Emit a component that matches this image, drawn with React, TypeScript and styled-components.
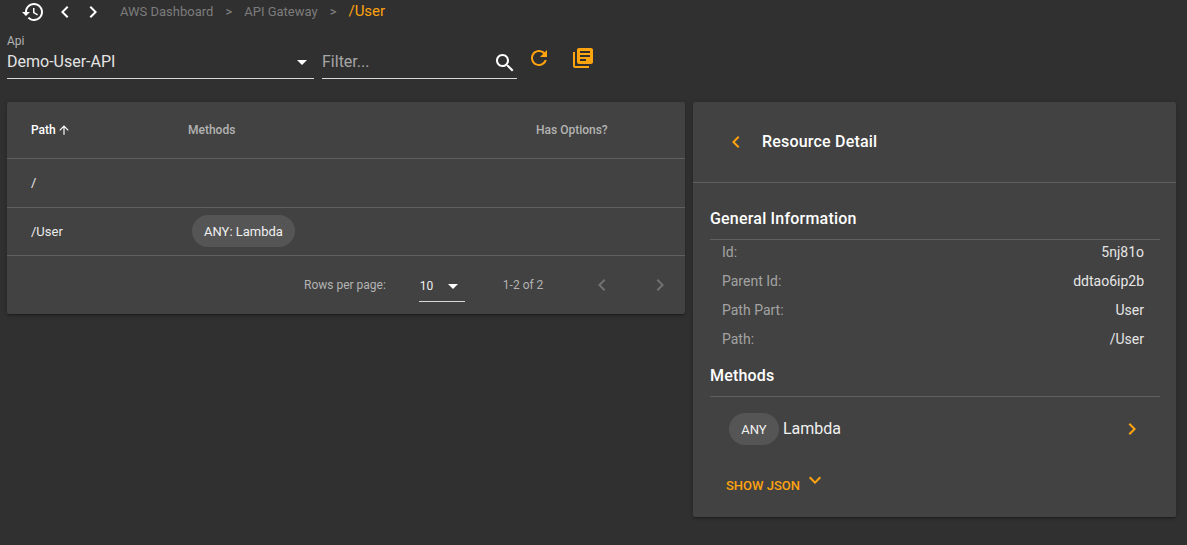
import React from 'react';
import styled, { createGlobalStyle } from 'styled-components';

const ORANGE = '#ffa30f';

const paths = {
  history:
    'M13 3c-4.97 0-9 4.03-9 9H1l3.89 3.89.07.14L9 12H6c0-3.87 3.13-7 7-7s7 3.13 7 7-3.13 7-7 7c-1.93 0-3.68-.79-4.94-2.06l-1.42 1.42C8.27 19.99 10.51 21 13 21c4.97 0 9-4.03 9-9s-4.03-9-9-9zm-1 5v5l4.28 2.54.72-1.21-3.5-2.08V8H12z',
  left: 'M15.41 7.41L14 6l-6 6 6 6 1.41-1.41L10.83 12z',
  right: 'M10 6L8.59 7.41 13.17 12l-4.58 4.59L10 18l6-6z',
  dropDown: 'M7 10l5 5 5-5z',
  search:
    'M15.5 14h-.79l-.28-.27C15.41 12.59 16 11.11 16 9.5 16 5.91 13.09 3 9.5 3S3 5.91 3 9.5 5.91 16 9.5 16c1.61 0 3.09-.59 4.23-1.57l.27.28v.79l5 4.99L20.49 19l-4.99-5zm-6 0C7.01 14 5 11.99 5 9.5S7.01 5 9.5 5 14 7.01 14 9.5 11.99 14 9.5 14z',
  refresh:
    'M17.65 6.35C16.2 4.9 14.21 4 12 4c-4.42 0-7.99 3.58-7.99 8s3.57 8 7.99 8c3.73 0 6.84-2.55 7.73-6h-2.08c-.82 2.33-3.04 4-5.65 4-3.31 0-6-2.69-6-6s2.69-6 6-6c1.66 0 3.14.69 4.22 1.78L13 11h7V4l-2.35 2.35z',
  books:
    'M4 6H2v14c0 1.1.9 2 2 2h14v-2H4V6zm16-4H8c-1.1 0-2 .9-2 2v12c0 1.1.9 2 2 2h12c1.1 0 2-.9 2-2V4c0-1.1-.9-2-2-2zm-1 9H9V9h10v2zm-4 4H9v-2h6v2zm4-8H9V5h10v2z',
  up: 'M4 12l1.41 1.41L11 7.83V20h2V7.83l5.58 5.59L20 12l-8-8-8 8z',
  expand: 'M16.59 8.59L12 13.17 7.41 8.59 6 10l6 6 6-6z',
};

const GlobalStyle = createGlobalStyle`
  html, body {
    margin: 0;
    padding: 0;
    background: #303030;
    font-family: Roboto, "Liberation Sans", sans-serif;
    color: #fff;
  }
`;

const Svg = styled.svg<{ $size?: number; $color?: string }>`
  display: block;
  flex: none;
  width: ${({ $size }) => $size || 24}px;
  height: ${({ $size }) => $size || 24}px;
  fill: ${({ $color }) => $color || '#fff'};
`;

function Icon({ d, size, color }: { d: string; size?: number; color?: string }) {
  return (
    <Svg viewBox="0 0 24 24" $size={size} $color={color}>
      <path d={d} />
    </Svg>
  );
}

const Page = styled.div`
  width: 1187px;
  height: 545px;
  overflow: hidden;
  box-sizing: border-box;
  padding: 0 11px 0 7px;
`;

const TopBar = styled.div`
  display: flex;
  align-items: center;
  height: 24px;
`;

const NavButtons = styled.div`
  display: flex;
  align-items: center;
  gap: 4px;
  margin-left: 14px;
  margin-right: 15px;
`;

const HistoryButton = styled.span`
  margin-right: 4px;
`;

const Crumb = styled.span<{ $active?: boolean }>`
  margin-bottom: 2px;
  font-size: ${({ $active }) => ($active ? '15px' : '13px')};
  color: ${({ $active }) => ($active ? ORANGE : '#7c7c7c')};
`;

const CrumbSep = styled.span`
  margin: 0 12px 2px;
  font-size: 13px;
  color: #8a8a8a;
`;

const FilterBar = styled.div`
  display: flex;
  align-items: flex-start;
  height: 78px;
  box-sizing: border-box;
  padding-top: 11px;
`;

const SelectField = styled.div`
  width: 307px;
  height: 44px;
  box-sizing: border-box;
  border-bottom: 1px solid #d8d8d8;
  margin-right: 8px;
`;

const SelectLabel = styled.div`
  font-size: 12px;
  line-height: 12px;
  color: #b3b3b3;
`;

const SelectRow = styled.div`
  display: flex;
  align-items: center;
  justify-content: space-between;
  height: 24px;
  margin-top: 3px;
  font-size: 16px;
  color: #e4e4e4;
`;

const FieldText = styled.span`
  margin-bottom: 2px;
`;

const FilterField = styled.div`
  display: flex;
  align-items: center;
  justify-content: space-between;
  width: 195px;
  height: 44px;
  box-sizing: border-box;
  padding-top: 12px;
  border-bottom: 1px solid #d8d8d8;
  font-size: 16px;
  color: #a6a6a6;
`;

const ActionButtons = styled.div`
  display: flex;
  align-items: center;
  gap: 20px;
  margin: 11px 0 0 10px;
`;

const Content = styled.div`
  display: flex;
  align-items: flex-start;
  gap: 8px;
`;

const Card = styled.section<{ $width: number; $height: number }>`
  width: ${({ $width }) => $width}px;
  height: ${({ $height }) => $height}px;
  flex: none;
  background: #424242;
  border-radius: 2px;
  box-shadow: 0 2px 2px -1px rgba(0, 0, 0, 0.3), 0 1px 4px rgba(0, 0, 0, 0.2);
  overflow: hidden;
`;

const TableRow = styled.div<{ $height: number }>`
  display: grid;
  grid-template-columns: 157px 348px 1fr;
  align-items: center;
  height: ${({ $height }) => $height}px;
  box-sizing: border-box;
  padding-left: 24px;
  border-bottom: 1px solid #5f5f5f;
  font-size: 13px;
  color: #ececec;
`;

const HeadCell = styled.div<{ $active?: boolean }>`
  display: flex;
  align-items: center;
  gap: 1px;
  font-size: 12px;
  font-weight: 500;
  color: ${({ $active }) => ($active ? '#fff' : '#b3b3b3')};
`;

const PathCell = styled.div`
  margin-bottom: 1px;
`;

const RowChip = styled.span`
  display: inline-flex;
  align-items: center;
  height: 32px;
  padding: 0 12px;
  margin: 0 0 1px 4px;
  border-radius: 16px;
  background: #555555;
  font-size: 13px;
  color: #f0f0f0;
`;

const ChipCell = styled.div`
  display: flex;
  align-items: center;
`;

const Pagination = styled.div`
  display: flex;
  align-items: center;
  height: 58px;
  font-size: 12px;
  color: #b3b3b3;
`;

const RowsLabel = styled.span`
  margin-left: 297px;
`;

const RowsSelect = styled.div`
  display: flex;
  align-items: center;
  justify-content: space-between;
  width: 46px;
  height: 31px;
  box-sizing: border-box;
  margin: 2px 0 0 33px;
  padding-left: 1px;
  border-bottom: 1px solid #d8d8d8;
  color: #f0f0f0;
`;

const PageCount = styled.span`
  margin-left: 38px;
  margin-right: 47px;
`;

const PageButtons = styled.div`
  display: flex;
  gap: 34px;
`;

const DetailHeader = styled.div`
  display: flex;
  align-items: center;
  height: 81px;
  box-sizing: border-box;
  padding-left: 31px;
  border-bottom: 1px solid #5f5f5f;
  font-size: 16px;
  font-weight: 500;
`;

const DetailTitle = styled.span`
  margin: 0 0 2px 14px;
  letter-spacing: 0.2px;
`;

const DetailBody = styled.div`
  padding: 24px 16px 0 17px;
`;

const SectionTitle = styled.h3`
  margin: 0;
  height: 33px;
  line-height: 23px;
  box-sizing: border-box;
  border-bottom: 1px solid #5f5f5f;
  font-size: 16px;
  font-weight: 500;
  letter-spacing: 0.2px;
`;

const InfoList = styled.dl`
  margin: 0 0 8px;
  padding: 0 16px 0 12px;
`;

const InfoRow = styled.div`
  display: flex;
  justify-content: space-between;
  align-items: flex-start;
  height: 29px;
  box-sizing: border-box;
  padding-top: 4px;
  font-size: 14px;
`;

const InfoLabel = styled.dt`
  color: #a3a3a3;
`;

const InfoValue = styled.dd`
  margin: 0;
  color: #e6e6e6;
`;

const MethodRow = styled.div`
  display: flex;
  align-items: center;
  height: 32px;
  margin-top: 16px;
  padding: 0 16px 0 19px;
  font-size: 16px;
  color: #f0f0f0;
`;

const MethodChip = styled.span`
  display: inline-flex;
  align-items: center;
  justify-content: center;
  width: 50px;
  height: 32px;
  margin-right: 4px;
  border-radius: 16px;
  background: #555555;
  font-size: 13px;
`;

const MethodName = styled.span`
  flex: 1;
  margin-bottom: 1px;
`;

const JsonToggle = styled.div`
  display: flex;
  align-items: center;
  height: 24px;
  margin: 25px 0 0 16px;
  font-size: 13px;
  font-weight: 500;
  color: ${ORANGE};
`;

const JsonLabel = styled.span`
  margin-top: 6px;
`;

const JsonIcon = styled.span`
  margin: -4px 0 0 3px;
`;

const info = [
  ['Id:', '5nj81o'],
  ['Parent Id:', 'ddtao6ip2b'],
  ['Path Part:', 'User'],
  ['Path:', '/User'],
];

export default function App() {
  return (
    <Page>
      <GlobalStyle />
      <TopBar>
        <NavButtons>
          <HistoryButton>
            <Icon d={paths.history} />
          </HistoryButton>
          <Icon d={paths.left} />
          <Icon d={paths.right} />
        </NavButtons>
        <Crumb>AWS Dashboard</Crumb>
        <CrumbSep>&gt;</CrumbSep>
        <Crumb>API Gateway</Crumb>
        <CrumbSep>&gt;</CrumbSep>
        <Crumb $active>/User</Crumb>
      </TopBar>

      <FilterBar>
        <SelectField>
          <SelectLabel>Api</SelectLabel>
          <SelectRow>
            <FieldText>Demo-User-API</FieldText>
            <Icon d={paths.dropDown} />
          </SelectRow>
        </SelectField>
        <FilterField>
          <FieldText>Filter...</FieldText>
          <Icon d={paths.search} />
        </FilterField>
        <ActionButtons>
          <Icon d={paths.refresh} color={ORANGE} />
          <Icon d={paths.books} color={ORANGE} />
        </ActionButtons>
      </FilterBar>

      <Content>
        <Card $width={678} $height={212}>
          <TableRow $height={57}>
            <HeadCell $active>
              Path
              <Icon d={paths.up} size={14} />
            </HeadCell>
            <HeadCell>Methods</HeadCell>
            <HeadCell>Has Options?</HeadCell>
          </TableRow>
          <TableRow $height={49}>
            <PathCell>/</PathCell>
          </TableRow>
          <TableRow $height={48}>
            <PathCell>/User</PathCell>
            <ChipCell>
              <RowChip>ANY: Lambda</RowChip>
            </ChipCell>
          </TableRow>
          <Pagination>
            <RowsLabel>Rows per page:</RowsLabel>
            <RowsSelect>
              10
              <Icon d={paths.dropDown} />
            </RowsSelect>
            <PageCount>1-2 of 2</PageCount>
            <PageButtons>
              <Icon d={paths.left} color="#717171" />
              <Icon d={paths.right} color="#717171" />
            </PageButtons>
          </Pagination>
        </Card>

        <Card $width={483} $height={415}>
          <DetailHeader>
            <Icon d={paths.left} color={ORANGE} />
            <DetailTitle>Resource Detail</DetailTitle>
          </DetailHeader>
          <DetailBody>
            <SectionTitle>General Information</SectionTitle>
            <InfoList>
              {info.map(([label, value]) => (
                <InfoRow key={label}>
                  <InfoLabel>{label}</InfoLabel>
                  <InfoValue>{value}</InfoValue>
                </InfoRow>
              ))}
            </InfoList>
            <SectionTitle>Methods</SectionTitle>
            <MethodRow>
              <MethodChip>ANY</MethodChip>
              <MethodName>Lambda</MethodName>
              <Icon d={paths.right} color={ORANGE} />
            </MethodRow>
            <JsonToggle>
              <JsonLabel>SHOW JSON</JsonLabel>
              <JsonIcon>
                <Icon d={paths.expand} color={ORANGE} />
              </JsonIcon>
            </JsonToggle>
          </DetailBody>
        </Card>
      </Content>
    </Page>
  );
}
